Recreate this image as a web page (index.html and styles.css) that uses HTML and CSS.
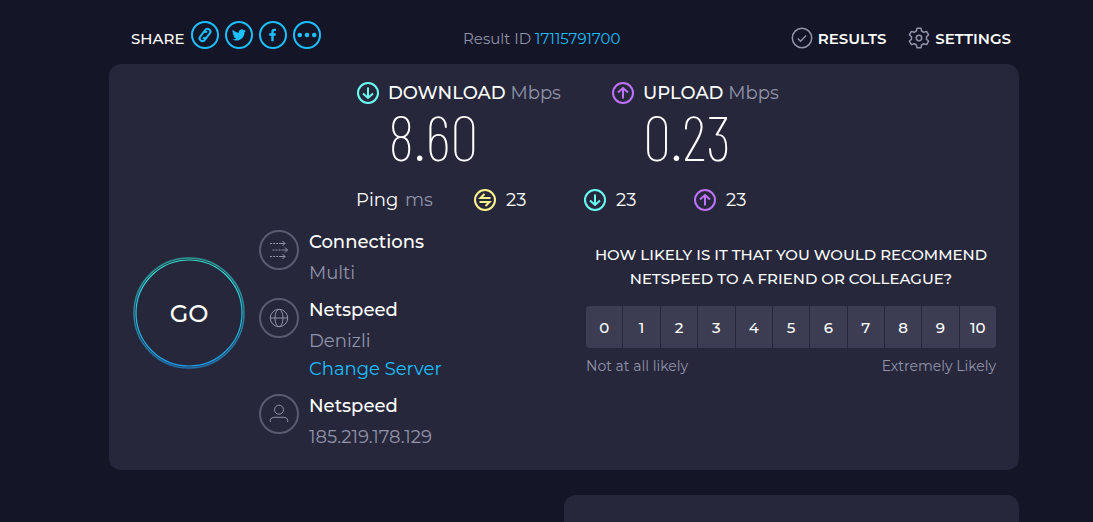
FILE: index.html
```
<!DOCTYPE html>
<html lang="en">
<head>
    <meta charset="UTF-8">
    <meta name="viewport" content="width=device-width, initial-scale=1.0">
    <title>Netspeed</title>
    <link rel="stylesheet" href="styles.css">
</head>
<body>
    <!-- Shared icons -->
    <svg class="sprite" aria-hidden="true">
        <symbol id="icon-down" viewBox="0 0 22 22">
            <circle cx="11" cy="11" r="10"/>
            <path d="M11 5.500v10.500M6 11.500l5 4.500 5-4.500"/>
        </symbol>
        <symbol id="icon-up" viewBox="0 0 22 22">
            <circle cx="11" cy="11" r="10"/>
            <path d="M11 16.500V6M6 10.500L11 6l5 4.500"/>
        </symbol>
        <symbol id="icon-idle" viewBox="0 0 22 22">
            <circle cx="11" cy="11" r="10"/>
            <path d="M10.500 5L6.500 9H16.500M5.500 13H15.500l-4 4"/>
        </symbol>
    </svg>

    <main class="container">
        <header class="topbar">
            <div class="share">
                <span class="share-title">SHARE</span>
                <a href="#" class="share-link" aria-label="Copy link">
                    <svg viewBox="0 0 28 28">
                        <circle cx="14" cy="14" r="13"/>
                        <g transform="rotate(-52 14 14)">
                            <path d="M13 16.800H9.800a2.800 2.800 0 0 1 0-5.600h4.700a2.800 2.800 0 0 1 2.800 2.800"/>
                            <path d="M15 11.200h3.200a2.800 2.800 0 0 1 0 5.600h-4.700a2.800 2.800 0 0 1-2.800-2.800"/>
                        </g>
                    </svg>
                </a>
                <a href="#" class="share-link" aria-label="Twitter">
                    <svg viewBox="0 0 28 28">
                        <circle cx="14" cy="14" r="13"/>
                        <path class="solid" transform="translate(7 7) scale(0.58)" d="M23.950 4.570a10 10 0 0 1-2.820.770 4.960 4.960 0 0 0 2.160-2.720c-.950.550-2 .950-3.130 1.180a4.920 4.920 0 0 0-8.380 4.480C7.690 8.090 4.070 6.130 1.640 3.160a4.920 4.920 0 0 0 1.520 6.570 4.900 4.900 0 0 1-2.230-.610v.060a4.920 4.920 0 0 0 3.950 4.830 5 5 0 0 1-2.210.080 4.940 4.940 0 0 0 4.600 3.420A9.870 9.870 0 0 1 0 19.540a14 14 0 0 0 7.550 2.210c9.050 0 14-7.500 14-13.980 0-.210 0-.420-.020-.630a9.940 9.940 0 0 0 2.460-2.550z"/>
                    </svg>
                </a>
                <a href="#" class="share-link" aria-label="Facebook">
                    <svg viewBox="0 0 28 28">
                        <circle cx="14" cy="14" r="13"/>
                        <path class="solid" d="M12.300 20.200v-5.500H10.200v-2.500h2.100v-1.400c0-2 1.200-3.100 3-3.100.900 0 1.600.1 1.600.1v2.100h-1c-.9 0-1.200.5-1.200 1.100v1.200h2.200l-.4 2.500h-1.800v5.500z"/>
                    </svg>
                </a>
                <a href="#" class="share-link" aria-label="More">
                    <svg viewBox="0 0 28 28">
                        <circle cx="14" cy="14" r="13"/>
                        <circle class="solid" cx="6.800" cy="14" r="2.300"/>
                        <circle class="solid" cx="14" cy="14" r="2.300"/>
                        <circle class="solid" cx="21.200" cy="14" r="2.300"/>
                    </svg>
                </a>
            </div>

            <div class="result-id">Result ID <a href="#">17115791700</a></div>

            <nav class="menu">
                <a href="#">
                    <svg viewBox="0 0 22 22">
                        <circle cx="11" cy="11" r="9.700"/>
                        <path d="M6.800 11.500l2.800 2.700 5.500-5.800"/>
                    </svg>
                    RESULTS
                </a>
                <a href="#">
                    <svg viewBox="0 0 22 22">
                        <path d="M9 1.200h4l.6 2.800 2.200 1.300 2.800-.9 2 3.500-2.100 1.900v2.400l2.100 1.900-2 3.500-2.800-.9-2.200 1.300-.6 2.800H9L8.400 18l-2.200-1.300-2.800.9-2-3.500 2.100-1.900V9.800L1.400 7.900l2-3.500 2.800.9L8.400 4z" stroke-linejoin="round"/>
                        <circle cx="11" cy="11" r="2.700"/>
                    </svg>
                    SETTINGS
                </a>
            </nav>
        </header>

        <section class="card">
            <div class="speeds">
                <div class="speed">
                    <svg class="icon download"><use href="#icon-down"/></svg>
                    <div class="speed-label">DOWNLOAD <span>Mbps</span></div>
                    <div class="speed-value">8.60</div>
                </div>
                <div class="speed">
                    <svg class="icon upload"><use href="#icon-up"/></svg>
                    <div class="speed-label">UPLOAD <span>Mbps</span></div>
                    <div class="speed-value">0.23</div>
                </div>
            </div>

            <div class="pings">
                <div class="ping-label">Ping <span>ms</span></div>
                <div class="ping"><svg class="icon idle"><use href="#icon-idle"/></svg>23</div>
                <div class="ping"><svg class="icon download"><use href="#icon-down"/></svg>23</div>
                <div class="ping"><svg class="icon upload"><use href="#icon-up"/></svg>23</div>
            </div>

            <div class="details">
                <button type="button" class="go">
                    <svg viewBox="0 0 112 112" aria-hidden="true">
                        <defs>
                            <linearGradient id="ring" x1="0" y1="0" x2="0" y2="1">
                                <stop offset="0" stop-color="#32e5cf"/>
                                <stop offset="1" stop-color="#1c9ff0"/>
                            </linearGradient>
                        </defs>
                        <circle class="ring-outer" cx="56" cy="56" r="55"/>
                        <circle class="ring-inner" cx="56" cy="56" r="53"/>
                    </svg>
                    <span>GO</span>
                </button>

                <div class="info">
                    <div class="info-item">
                        <svg viewBox="0 0 40 40">
                            <circle class="frame" cx="20" cy="20" r="19"/>
                            <path class="dots" d="M11 13.500h12M13.500 20h12M11 26.500h12"/>
                            <path d="M23.500 11l2.500 2.500-2.500 2.500M26 17.500l2.500 2.500-2.500 2.500M23.500 24l2.500 2.500-2.500 2.500M22 13.500h4M24.500 20h4M22 26.500h4"/>
                        </svg>
                        <div>
                            <h2>Connections</h2>
                            <p>Multi</p>
                        </div>
                    </div>
                    <div class="info-item">
                        <svg viewBox="0 0 40 40">
                            <circle class="frame" cx="20" cy="20" r="19"/>
                            <circle cx="20" cy="20" r="8.700"/>
                            <ellipse cx="20" cy="20" rx="4" ry="8.700"/>
                            <path d="M11.300 20h17.400"/>
                        </svg>
                        <div>
                            <h2>Netspeed</h2>
                            <p>Denizli</p>
                            <a href="#">Change Server</a>
                        </div>
                    </div>
                    <div class="info-item">
                        <svg viewBox="0 0 40 40">
                            <circle class="frame" cx="20" cy="20" r="19"/>
                            <circle cx="20" cy="15.700" r="4.500"/>
                            <path d="M11.300 28v-1.500c0-2.200 2-3.200 4-3.200h9.400c2 0 4 1 4 3.200V28"/>
                        </svg>
                        <div>
                            <h2>Netspeed</h2>
                            <p>185.219.178.129</p>
                        </div>
                    </div>
                </div>

                <div class="survey">
                    <h3>HOW LIKELY IS IT THAT YOU WOULD RECOMMEND NETSPEED TO A FRIEND OR COLLEAGUE?</h3>
                    <div class="scale">
                        <button type="button">0</button>
                        <button type="button">1</button>
                        <button type="button">2</button>
                        <button type="button">3</button>
                        <button type="button">4</button>
                        <button type="button">5</button>
                        <button type="button">6</button>
                        <button type="button">7</button>
                        <button type="button">8</button>
                        <button type="button">9</button>
                        <button type="button">10</button>
                    </div>
                    <div class="scale-labels">
                        <span>Not at all likely</span>
                        <span>Extremely Likely</span>
                    </div>
                </div>
            </div>
        </section>

        <section class="card next-card"></section>
    </main>
</body>
</html>
```

FILE: styles.css
```
* {
    box-sizing: border-box;
}

body {
    margin: 0;
    background-color: #141526;
    color: #fff;
    font-family: Montserrat, Inter, sans-serif;
    font-size: 18px;
}

a {
    color: #1cbfff;
    text-decoration: none;
}

h2, h3, p {
    margin: 0;
}

svg {
    display: block;
    flex-shrink: 0;
    fill: none;
    stroke: currentColor;
}

button {
    padding: 0;
    border: none;
    color: #fff;
    font-family: inherit;
    cursor: pointer;
}

.sprite {
    display: none;
}

.container {
    display: flex;
    flex-direction: column;
    min-height: 100vh;
    padding: 0 74px 0 109px;
}

/* Top bar */
.topbar {
    display: grid;
    grid-template-columns: 332px 1fr auto;
    align-items: center;
    height: 64px;
    padding: 12px 8px 0 22px;
    font-size: 15px;
}

.share {
    display: flex;
    align-items: center;
    gap: 6px;
    padding-bottom: 6px;
}

.share-title {
    padding: 6px 1px 0 0;
    font-weight: 500;
}

.share-link svg {
    width: 28px;
    height: 28px;
    stroke-width: 2;
}

.solid {
    fill: currentColor;
    stroke: none;
}

.result-id {
    color: #9193a8;
}

.menu {
    display: flex;
    gap: 22px;
}

.menu a {
    display: flex;
    align-items: center;
    gap: 5px;
    color: #fff;
    font-weight: 600;
}

.menu svg {
    width: 22px;
    height: 22px;
    color: #9193a8;
    stroke-width: 1.5;
}

.card {
    border-radius: 12px;
    background-color: #26273b;
}

/* Speeds and ping */
.speeds {
    display: flex;
    padding: 17px 0 0 248px;
}

.speed {
    display: grid;
    grid-template-columns: 22px auto;
    column-gap: 9px;
    align-items: center;
    width: 255px;
}

.speed-label {
    line-height: 24px;
    font-weight: 500;
}

.speed-label span,
.ping-label span {
    color: #9193a8;
    font-weight: 400;
}

.speed-value {
    grid-column: 2;
    line-height: 61px;
    font-family: "Barlow Condensed", "Roboto Condensed", Roboto, sans-serif;
    font-size: 64px;
    font-weight: 200;
}

.icon {
    width: 22px;
    height: 22px;
    stroke-width: 2;
}

.download {
    color: #6afff3;
}

.upload {
    color: #bf71ff;
}

.idle {
    color: #fff38e;
}

.pings {
    display: flex;
    align-items: center;
    padding: 23px 0 19px 247px;
    line-height: 22px;
}

.ping-label {
    width: 118px;
}

.ping-label span {
    margin-left: 2px;
}

.ping {
    display: flex;
    gap: 10px;
    width: 110px;
}

/* Lower part of the card */
.details {
    display: grid;
    grid-template-columns: 126px 1fr 47.5%;
    padding: 0 23px 19px 24px;
}

.go {
    display: grid;
    place-items: center;
    width: 112px;
    height: 112px;
    margin-top: 27px;
    border-radius: 50%;
    background: none;
    font-size: 24px;
    font-weight: 500;
}

.go svg,
.go span {
    grid-area: 1 / 1;
}

.go svg {
    width: 112px;
    height: 112px;
    stroke: url(#ring);
}

.ring-outer {
    stroke-width: 1.5;
    opacity: 0.6;
}

.ring-inner {
    stroke-width: 1.2;
}

.info {
    display: flex;
    flex-direction: column;
    gap: 11px;
}

.info-item {
    display: flex;
    gap: 10px;
}

.info-item svg {
    width: 40px;
    height: 40px;
    color: #9193a8;
}

.frame {
    stroke: #5a5b70;
    stroke-width: 2;
}

.dots {
    stroke-dasharray: 2 1;
}

.info-item h2 {
    margin-bottom: 5px;
    line-height: 24px;
    font-size: 18px;
    font-weight: 500;
}

.info-item p,
.info-item a {
    display: block;
    line-height: 28px;
}

.info-item p {
    color: #9193a8;
}

.survey {
    padding-top: 13px;
}

.survey h3 {
    line-height: 24px;
    font-size: 15px;
    font-weight: 500;
    text-align: center;
}

.scale {
    display: flex;
    gap: 1px;
    margin-top: 15px;
    overflow: hidden;
    border-radius: 4px;
}

.scale button {
    flex: 1;
    height: 42px;
    background-color: #3c3d52;
    font-size: 15px;
    font-weight: 500;
}

.scale button:hover {
    background-color: #4b4c63;
}

.scale-labels {
    display: flex;
    justify-content: space-between;
    margin-top: 8px;
    line-height: 20px;
    color: #9193a8;
    font-size: 14px;
}

.next-card {
    flex: 1;
    width: 50%;
    margin: 25px 0 0 auto;
    border-radius: 12px 12px 0 0;
}
```
